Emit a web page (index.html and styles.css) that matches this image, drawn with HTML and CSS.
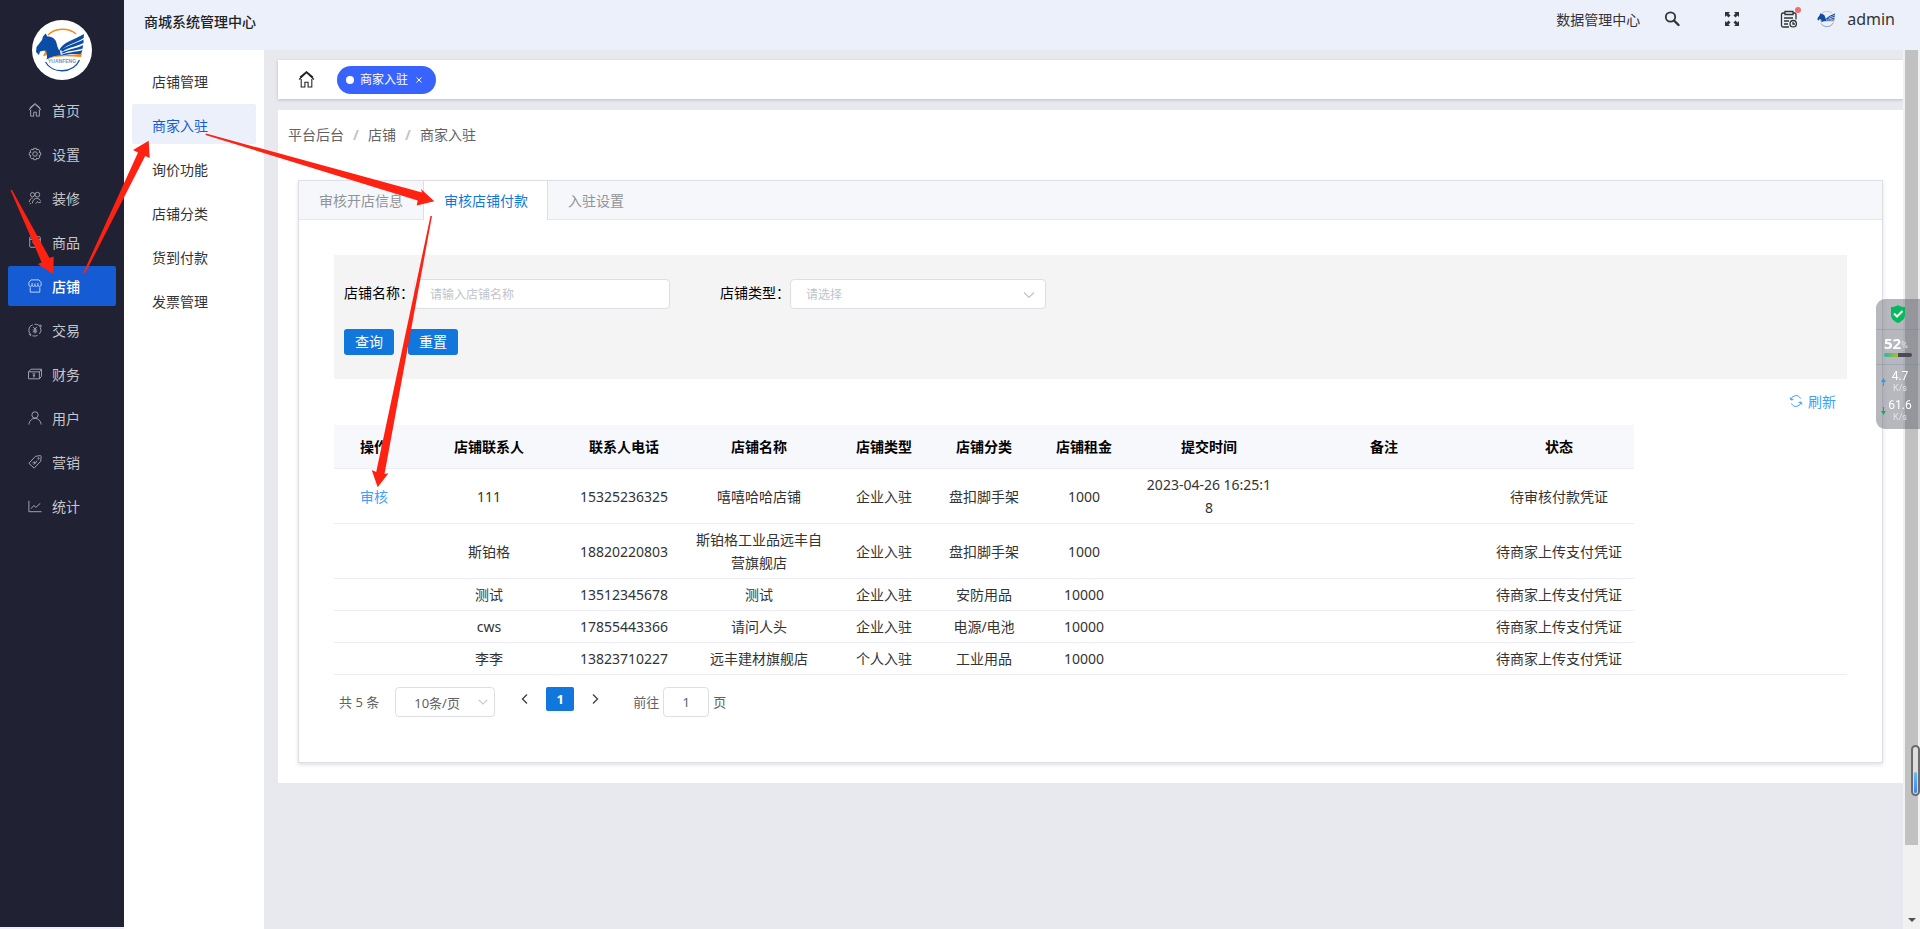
FILE: index.html
```html
<!DOCTYPE html>
<html lang="zh-CN">
<head>
<meta charset="utf-8">
<title>商城系统管理中心</title>
<link rel="stylesheet" href="styles.css">
</head>
<body>
<svg class="defs" aria-hidden="true">
  <symbol id="logo" viewBox="0 0 60 60">
    <path d="M16 15C23 7.500 37 7.500 44 14" fill="none" stroke="#ef8a1d" stroke-width="1.300"/>
    <path d="M13.500 42C20 54 41 54 47.500 40" fill="none" stroke="#1450a8" stroke-width="1.300"/>
    <path d="M13.500 13.500l2 3c5 0 8 2.500 9 6.500 1 4 1.500 6 3.500 8l1 5c-4-1-8 0-14.500 3.500 1-3 .5-5-1-7l-1-2-4.500 1-1 3.500L4 32l.5-5 5.500-7 1-3.500z" fill="#0b4da6"/>
    <path d="M27 31C30 22 42 20 52 14l-.3 4C44 23 35 24 30 30zM29 31c5-6 15-7 22.500-11.500V23C44 27 37 26.500 31 31.500zM29 33c8-4.500 16-4 22-8l-.3 3.500C44 31 38 30 31 33.500zM29 35c9-3.500 16-3 21.500-5l-1.500 4c-6 0-11-.5-20 2z" fill="#0b4da6"/>
    <path d="M11 36l3-6 1 5-3 1zM14 39.500C22 34 38 36 50 33.500L49 37C38 36.500 25 35 14 39.500z" fill="#ef8a1d"/>
  </symbol>
  <symbol id="home" viewBox="0 0 16 16"><path d="M1 8l7-6.500L15 8M1.800 5.800L8 .6l6.200 5.200M3 7.500V15h3.500v-4.500h3V15H13V7.500"/></symbol>
  <symbol id="gear" viewBox="0 0 16 16"><circle cx="8" cy="8" r="2.600"/><path d="M6.600 1.500h2.800l.5 1.800 1.700-.9 2 2-.9 1.700 1.800.5v2.800l-1.800.5.9 1.700-2 2-1.700-.9-.5 1.800H6.600l-.5-1.800-1.700.9-2-2 .9-1.700-1.800-.5V6.600l1.800-.5-.9-1.700 2-2 1.700.9z"/></symbol>
  <symbol id="people" viewBox="0 0 16 16"><circle cx="5.200" cy="4.200" r="2.400"/><circle cx="10.700" cy="4.200" r="2.700"/><path d="M1.500 12.500C2 9.500 3.500 8 5.500 8M5 14c.3-4 2.500-5.500 5-5.500 2 0 3.500 1 4.200 2.500M9 14.500l2-2.500 1.500 1.500 2.500-1M2 14.500h1.500"/></symbol>
  <symbol id="box" viewBox="0 0 16 16"><rect x="2" y="2" width="12" height="12" rx="1"/><path d="M2 5h12M5.500 7.500c.5 4 4.500 4 5 0"/></symbol>
  <symbol id="shop" viewBox="0 0 16 16"><path d="M3.500 1h9L15 4v3c0 2-3.500 2-3.700 0 0 2-3.300 2-3.300 0 0 2-3.300 2-3.300 0C4.500 9 1 9 1 7V4zM2.500 9.500V15h11V9.500M4.700 7V4.500M8 7V5M11.300 7V4.500"/></symbol>
  <symbol id="trade" viewBox="0 0 16 16"><path d="M3 13A6.500 6.500 0 0 1 5.500 2M7.500 1.500A6.500 6.500 0 0 1 13 12.500M5 14.500c2 .7 4 .6 6-.5M3 13H1M3 13v2M13 2.500h2v2M6 4.500l2 2.500 2-2.500M8 7v5M5.500 8h5M5.500 10h5"/></symbol>
  <symbol id="money" viewBox="0 0 16 16"><path d="M.6 5.500h12.400v8H.6zM.6 5.500L3.500 2.500h12L13 5.500M15.500 2.500v8L13 13.500M5.500 7l1.300 1.800L8 7M6.800 8.800V12M5.500 10h2.600"/></symbol>
  <symbol id="user" viewBox="0 0 16 16"><circle cx="8" cy="4.500" r="3.600"/><path d="M1 15.500C1.500 11 4.500 8.500 8 8.500s6.500 2.500 7 7"/></symbol>
  <symbol id="tag" viewBox="0 0 16 16"><path d="M8.500 1.500l5.500-.8c.6 0 1 .3 1 .9l-.4 5.400-7.600 8L1 9.500zM5 9.500l2-2 .5 2.500 3-3.500M6.500 11L9 8.500"/><circle cx="12" cy="4" r=".8"/></symbol>
  <symbol id="chart" viewBox="0 0 16 16"><path d="M1 2v12.500h14.500M3.500 11l3-3.500 2.500 2L14 5"/></symbol>
  <symbol id="down" viewBox="0 0 14 14"><path d="M2 4.500l5 5 5-5"/></symbol>
</svg>

<div class="app">
  <nav class="sidebar" aria-label="主菜单">
    <svg class="brand" viewBox="0 0 60 60"><use href="#logo"/><text x="30" y="43" text-anchor="middle" class="logo-text">YUANFENG</text></svg>
    <a class="side-item" href="#"><svg><use href="#home"/></svg>首页</a>
    <a class="side-item" href="#"><svg><use href="#gear"/></svg>设置</a>
    <a class="side-item" href="#"><svg><use href="#people"/></svg>装修</a>
    <a class="side-item" href="#"><svg><use href="#box"/></svg>商品</a>
    <a class="side-item active" href="#"><svg><use href="#shop"/></svg>店铺</a>
    <a class="side-item" href="#"><svg><use href="#trade"/></svg>交易</a>
    <a class="side-item" href="#"><svg><use href="#money"/></svg>财务</a>
    <a class="side-item" href="#"><svg><use href="#user"/></svg>用户</a>
    <a class="side-item" href="#"><svg><use href="#tag"/></svg>营销</a>
    <a class="side-item" href="#"><svg><use href="#chart"/></svg>统计</a>
  </nav>

  <div class="page">
    <header class="topbar">
      <h1 class="title">商城系统管理中心</h1>
      <div class="tools">
        <a class="tool-link" href="#">数据管理中心</a>
        <button class="tool search" aria-label="搜索"><svg viewBox="0 0 16 16"><circle cx="6.500" cy="6" r="4.700" fill="none" stroke="#333" stroke-width="1.800"/><path d="M10 9.500l4.500 4.500" stroke="#333" stroke-width="2.400" stroke-linecap="round"/></svg></button>
        <button class="tool expand" aria-label="全屏"><svg viewBox="0 0 16 16" fill="#333"><path d="M1 1h5L4.500 2.500 6.500 4.500 4.500 6.500 2.500 4.500 1 6zM15 1v5l-1.500-1.500L11.500 6.500 9.500 4.500l2-2L10 1zM1 15v-5l1.500 1.500L4.500 9.500l2 2-2 2L6 15zM15 15h-5l1.500-1.500L9.500 11.500l2-2 2 2L15 10z"/></svg></button>
        <button class="tool tasks" aria-label="待办"><svg viewBox="0 0 18 18" fill="none" stroke="#333" stroke-width="1.300"><path d="M4.500 3H3c-1 0-1.500.5-1.500 1.500v11c0 1 .5 1.500 1.500 1.500h6M13 3h1.500c1 0 1.500.5 1.500 1.500v5M5 1.500h8v3H5zM4 8h9M4 11h5M4 14h4"/><circle cx="13.200" cy="13.700" r="3.200"/><path d="M13 12v2h2"/></svg><span class="dot"></span></button>
        <a class="account" href="#"><svg><use href="#logo"/></svg>admin</a>
      </div>
    </header>

    <div class="below">
      <nav class="submenu" aria-label="店铺菜单">
        <a href="#">店铺管理</a>
        <a class="active" href="#">商家入驻</a>
        <a href="#">询价功能</a>
        <a href="#">店铺分类</a>
        <a href="#">货到付款</a>
        <a href="#">发票管理</a>
      </nav>

      <main class="main">
        <div class="tagbar">
          <a class="home-link" href="#" aria-label="首页"><svg><use href="#home"/></svg></a>
          <button class="pill"><span class="pill-dot"></span>商家入驻<svg viewBox="0 0 6 6"><path d="M.5.5l5 5M5.500.5l-5 5" stroke="#fff"/></svg></button>
        </div>

        <section class="panel">
          <div class="crumbs"><a href="#">平台后台</a><b>/</b><a href="#">店铺</a><b>/</b><span>商家入驻</span></div>

          <div class="card">
            <div class="tabs" role="tablist">
              <button role="tab">审核开店信息</button>
              <button role="tab" class="active" aria-selected="true">审核店铺付款</button>
              <button role="tab">入驻设置</button>
            </div>
            <div class="card-body">
              <form class="filter">
                <div class="fields">
                  <div class="field"><label for="name">店铺名称：</label><input id="name" type="text" placeholder="请输入店铺名称"></div>
                  <div class="field"><label for="type">店铺类型：</label><span class="select"><select id="type"><option>请选择</option></select><svg><use href="#down"/></svg></span></div>
                </div>
                <div class="actions"><button type="button">查询</button><button type="button">重置</button></div>
              </form>

              <div class="refresh"><button><svg viewBox="0 0 14 14"><path d="M2 6a5 5 0 0 1 9.500-1.500M12 8a5 5 0 0 1-9.500 1.500M1 3.500L2 6l2.500-.5M13 10.500L12 8l-2.500.5"/></svg>刷新</button></div>

              <div class="table-wrap">
                <table>
                  <colgroup><col class="w80"><col class="w150"><col class="w120"><col class="w150"><col class="w100"><col class="w100"><col class="w100"><col class="w150"><col class="w200"><col class="w150"></colgroup>
                  <thead><tr><th>操作</th><th>店铺联系人</th><th>联系人电话</th><th>店铺名称</th><th>店铺类型</th><th>店铺分类</th><th>店铺租金</th><th>提交时间</th><th>备注</th><th>状态</th></tr></thead>
                  <tbody>
                    <tr><td><a href="#">审核</a></td><td>111</td><td>15325236325</td><td>嘻嘻哈哈店铺</td><td>企业入驻</td><td>盘扣脚手架</td><td>1000</td><td>2023-04-26 16:25:18</td><td></td><td>待审核付款凭证</td></tr>
                    <tr><td></td><td>斯铂格</td><td>18820220803</td><td>斯铂格工业品远丰自营旗舰店</td><td>企业入驻</td><td>盘扣脚手架</td><td>1000</td><td></td><td></td><td>待商家上传支付凭证</td></tr>
                    <tr><td></td><td>测试</td><td>13512345678</td><td>测试</td><td>企业入驻</td><td>安防用品</td><td>10000</td><td></td><td></td><td>待商家上传支付凭证</td></tr>
                    <tr><td></td><td>cws</td><td>17855443366</td><td>请问人头</td><td>企业入驻</td><td>电源/电池</td><td>10000</td><td></td><td></td><td>待商家上传支付凭证</td></tr>
                    <tr><td></td><td>李李</td><td>13823710227</td><td>远丰建材旗舰店</td><td>个人入驻</td><td>工业用品</td><td>10000</td><td></td><td></td><td>待商家上传支付凭证</td></tr>
                  </tbody>
                </table>
              </div>

              <div class="pager">
                <span>共 5 条</span>
                <span class="select size"><select aria-label="每页条数"><option>10条/页</option></select><svg><use href="#down"/></svg></span>
                <div class="pages">
                  <button aria-label="上一页"><svg viewBox="0 0 10 10"><path d="M7 .5L2.500 5 7 9.500"/></svg></button>
                  <button class="current">1</button>
                  <button aria-label="下一页"><svg viewBox="0 0 10 10"><path d="M3 .5L7.500 5 3 9.500"/></svg></button>
                </div>
                <label for="goto">前往</label>
                <input id="goto" type="text" value="1">
                <span>页</span>
              </div>
            </div>
          </div>
        </section>
      </main>

      <div class="scroll"><div class="thumb"></div><svg viewBox="0 0 8 4"><path d="M0 0h8L4 4z" fill="#505050"/></svg></div>
    </div>
  </div>
</div>

<aside class="monitor">
  <svg class="shield" viewBox="0 0 14 18"><path d="M7 0c2 1.500 4.500 2 7 2v8c0 4-3.500 6.500-7 8-3.500-1.500-7-4-7-8V2c2.500 0 5-.5 7-2z" fill="#05b95c"/><path d="M3 8.500l3 3 5.500-5.500" fill="none" stroke="#fff" stroke-width="2"/></svg>
  <div class="usage"><div><b>52</b><small>%</small></div><span class="bar"></span></div>
  <div class="rate"><svg viewBox="0 0 5 8"><path d="M2.500 0L5 4H3v4H2V4H0z" fill="#1fa0ff"/></svg><div>4.7<small>K/s</small></div></div>
  <div class="rate"><svg viewBox="0 0 5 8"><path d="M2.500 8L5 4H3V0H2v4H0z" fill="#0bb35a"/></svg><div>61.6<small>K/s</small></div></div>
</aside>
<div class="gauge"><span></span></div>

<svg class="arrows" viewBox="0 0 500 500" aria-hidden="true">
  <path d="M10.500 190h1.500l37.500 68 4.200-1.500-.4 17.500-15.600-10 4-1.500z"/>
  <path d="M83.500 272.500L138 152.500l-5-2.500 15.700-9.300 1 17.300-4.500-2L85 273.500z"/>
  <path d="M206 133.500l216 59-1-3.500 13.300 12.300-17.600 4.200 1-5L205.500 135z"/>
  <path d="M430.500 216h1.500l-47.500 258 4-.7-10.800 14-6-17.300 4.500 2z"/>
</svg>
</body>
</html>
```
FILE: styles.css
```css
* { box-sizing: border-box; }
body { margin: 0; background: #f3eef5; color: #333; font: 14px/23px "Noto Sans", "Noto Sans CJK SC", sans-serif; }
a { color: inherit; text-decoration: none; }
button, input, select { font: inherit; color: inherit; margin: 0; }
button { padding: 0; border: 0; background: none; cursor: pointer; }
svg { display: block; flex: none; }
.defs { position: absolute; width: 0; height: 0; }
.logo-text { font: bold 5px "Liberation Sans", sans-serif; fill: #6f93c9; }

.app { display: flex; min-height: 100vh; }
.sidebar { flex: none; width: 124px; margin-bottom: 2px; padding: 20px 8px; background: #202132; display: flex; flex-direction: column; gap: 4px; }
.brand { width: 60px; height: 60px; margin: 0 auto 6px; border-radius: 50%; background: #fff; }
.side-item { display: flex; align-items: center; gap: 10px; height: 40px; padding-left: 20px; border-radius: 2px; color: #c6c7cb; }
.side-item svg { width: 14px; height: 14px; fill: none; stroke: #a5a6ad; stroke-width: 1.1; }
.side-item.active { background: #155bd4; color: #fff; font-weight: 500; }
.side-item.active svg { stroke: #c4d6f6; }

.page { flex: 1; min-width: 0; display: flex; flex-direction: column; }
.topbar { display: flex; justify-content: space-between; height: 50px; padding: 0 25px 0 20px; background: #ecf0fb; }
.title { margin: 0; font-size: 14px; line-height: 44px; font-weight: 500; color: #222; }
.tools { display: flex; align-items: center; height: 38px; }
.tool { position: relative; }
.tool svg { width: 16px; height: 16px; }
.search { margin-left: 24px; }
.expand { margin-left: 44px; }
.tasks { margin-left: 40px; }
.tasks svg { width: 18px; height: 18px; }
.dot { position: absolute; top: -3px; right: -3px; width: 6px; height: 6px; border-radius: 50%; background: #f56c6c; }
.account { display: flex; align-items: center; gap: 9px; margin-left: 18px; font-size: 16px; }
.account svg { width: 22px; height: 22px; }

.below { flex: 1; display: flex; }
.submenu { flex: none; width: 140px; padding: 10px 8px; background: #fff; display: flex; flex-direction: column; gap: 4px; }
.submenu a { padding-left: 20px; line-height: 44px; height: 40px; border-radius: 2px; }
.submenu .active { background: #ecf0fb; color: #155bd4; }

.main { flex: 1; min-width: 0; padding: 10px 0 0 14px; background: #e8e9ee; }
.tagbar { display: flex; align-items: center; gap: 22px; height: 39px; padding: 0 20px; background: #fff; box-shadow: 0 1px 3px rgba(0, 20, 20, .2); }
.home-link svg { width: 17px; height: 17px; fill: none; stroke: #222; stroke-width: 1; }
.pill { display: flex; align-items: center; height: 28px; padding: 0 14px 0 9px; border-radius: 14px; background: #3963ff; color: #fff; font-size: 12px; }
.pill-dot { width: 8px; height: 8px; margin-right: 6px; border-radius: 50%; background: #fff; }
.pill svg { width: 6px; height: 6px; margin-left: 8px; }

.panel { margin-top: 11px; padding: 13px 20px 20px; background: #fff; }
.crumbs { display: flex; gap: 9px; margin-left: -10px; color: #606266; }
.crumbs b { width: 6px; color: #c0c4cc; }
.card { margin-top: 34px; border: 1px solid #dcdfe6; box-shadow: 0 2px 4px rgba(0, 0, 0, .12); }
.tabs { display: flex; background: #f5f7fa; border-bottom: 1px solid #e4e7ed; }
.tabs button { height: 39px; margin-bottom: -1px; padding: 0 20px; color: #909399; border-bottom: 1px solid #e4e7ed; }
.tabs .active { padding: 0 19px 0 20px; background: #fff; color: #1177dc; border: 0 solid #dcdfe6; border-width: 0 1px; }
.card-body { padding: 35px 35px 45px; }

.filter { min-height: 124px; padding: 24px 10px; background: #f4f4f4; color: #000; }
.fields { display: flex; gap: 50px; }
.field { display: flex; align-items: center; }
.field label { width: 70px; line-height: 28px; padding-bottom: 2px; white-space: nowrap; }
.field input, .field .select { width: 256px; }
input, select { width: 100%; height: 30px; padding: 0 15px; border: 1px solid #dcdfe6; border-radius: 4px; background: #fff; outline: 0; }
.field input, .field select { font-size: 12px; color: #c0c4cc; }
input::placeholder { color: #c0c4cc; opacity: 1; }
select { appearance: none; }
.select { position: relative; }
.select svg { position: absolute; right: 10px; top: 9px; width: 14px; height: 14px; fill: none; stroke: #c0c4cc; stroke-width: 1.2; pointer-events: none; }
.actions { display: flex; gap: 14px; margin-top: 20px; }
.actions button { width: 50px; height: 26px; padding-bottom: 2px; border-radius: 3px; background: #1177dc; color: #fff; }

.refresh { display: flex; justify-content: flex-end; padding: 0 11px 2px; height: 46px; }
.refresh button { display: flex; align-items: center; gap: 5px; color: #409eff; }
.refresh svg { width: 14px; height: 14px; fill: none; stroke: #409eff; stroke-width: 1; }

.table-wrap { border-bottom: 1px solid #ebeef5; }
table { width: 1300px; table-layout: fixed; border-spacing: 0; text-align: center; margin-bottom: -1px; }
.w80 { width: 80px; } .w100 { width: 100px; } .w120 { width: 120px; } .w150 { width: 150px; } .w200 { width: 200px; }
th, td { padding: 4px 10px; border-bottom: 1px solid #ebeef5; word-break: break-all; }
th { padding: 10px; background: #f7f8fb; color: #000; font-weight: 600; }
td a { color: #409eff; }

.pager { display: flex; margin-top: 12px; padding-left: 5px; line-height: 30px; font-size: 13px; color: #606266; }
.size { width: 100px; margin-left: 16px; }
.size select { display: block; padding: 0 18px; }
.size svg { right: 6px; width: 12px; height: 12px; }
.pages { display: flex; gap: 7px; margin: 0 24px 0 16px; height: 24px; }
.pages button { display: flex; align-items: center; justify-content: center; width: 28px; border-radius: 2px; }
.pages svg { width: 10px; height: 10px; fill: none; stroke: #444; stroke-width: 1.4; }
.pages .current { background: #1177dc; color: #fff; font-weight: 700; }
.pager input { width: 46px; margin: 0 4px; text-align: center; }

.scroll { flex: none; width: 17px; padding: 0 2px; background: #f1f1f1; display: flex; flex-direction: column; align-items: center; justify-content: space-between; }
.thumb { width: 13px; height: 795px; max-height: 91%; background: #c1c1c1; }
.scroll > svg { width: 8px; height: 4px; margin-bottom: 7px; }

.monitor { position: fixed; right: 0; top: 299px; width: 44px; height: 130px; padding-top: 6px; border-radius: 9px 0 0 9px; background: rgba(95, 97, 108, .45); color: #fff; display: flex; flex-direction: column; font: 12px/12px Roboto, sans-serif; }
.shield { width: 14px; height: 18px; margin: 0 0 6px 15px; }
.usage { height: 36px; padding: 6px 0 0 8px; border: solid rgba(110, 130, 145, .3); border-width: 1px 0; }
.usage div { display: flex; align-items: flex-end; white-space: nowrap; }
.usage b { font: bold 15px/15px "Noto Sans", sans-serif; }
.usage small, .rate small { font-size: 9px; line-height: 12px; color: #e2e2e6; }
.bar { display: block; width: 28px; height: 4px; margin-top: 2px; border-radius: 2px; background: linear-gradient(90deg, #2bb5a8, #a5c32c 50%, #4b4b57 50%); }
.rate { display: flex; align-items: center; gap: 2px; margin-top: 5px; padding-left: 5px; }
.rate svg { width: 5px; height: 8px; }
.rate div { flex: 1; padding-right: 8px; text-align: center; }
.rate small { display: block; }
.gauge { position: fixed; right: 0; top: 745px; width: 9px; height: 51px; padding: 25px 1px 1px; border: 2px solid #6b6b6b; border-radius: 5px; background: #ddd; }
.gauge span { display: block; height: 21px; border-radius: 2px; background: linear-gradient(#6bbcf5, #3b82ff); }
.arrows { position: absolute; left: 0; top: 0; width: 500px; height: 500px; fill: #ff2212; pointer-events: none; }
```
